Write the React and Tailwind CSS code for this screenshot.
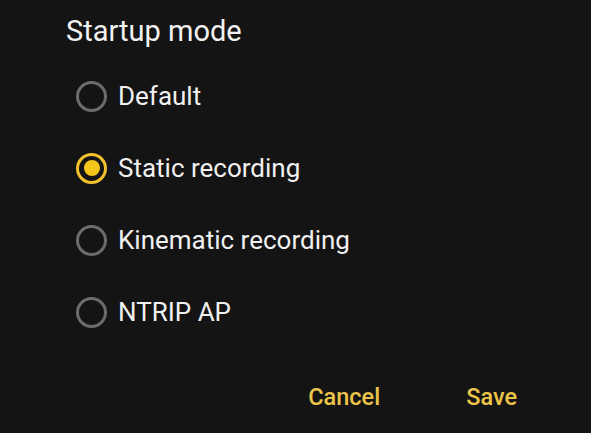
import { useState } from "react";

const OPTIONS = ["Default", "Static recording", "Kinematic recording", "NTRIP AP"];

function Radio({ checked }) {
  return (
    <div
      className={
        "h-[31px] w-[31px] rounded-full border-[3px] flex items-center justify-center shrink-0 " +
        (checked ? "border-[#f2c12e]" : "border-[#6b6b6b]")
      }
    >
      {checked && <div className="h-[16px] w-[16px] rounded-full bg-[#f5c51c]" />}
    </div>
  );
}

export default function App() {
  const [mode, setMode] = useState("Static recording");

  return (
    <div className="w-[591px] h-[433px] bg-[#141414] font-['Roboto',sans-serif] overflow-hidden">
      {/* Title */}
      <div className="h-[60px] pl-[66px] pt-[12px]">
        <h1 className="text-[29px] leading-[38px] text-[#f2f2f2]">Startup mode</h1>
      </div>

      {/* Options */}
      <div className="flex flex-col">
        {OPTIONS.map((opt) => (
          <button
            key={opt}
            onClick={() => setMode(opt)}
            className="h-[72px] pl-[76px] flex items-center gap-[11px] text-left"
          >
            <Radio checked={mode === opt} />
            <span className="text-[26px] text-[#f0f0f0]">{opt}</span>
          </button>
        ))}
      </div>

      {/* Actions */}
      <div className="flex justify-end items-center gap-[86px] pr-[74px] h-[50px] mt-[25px]">
        <button className="text-[23.5px] font-medium text-[#ecc44a]">Cancel</button>
        <button className="text-[23.5px] font-medium text-[#ecc44a]">Save</button>
      </div>
    </div>
  );
}
